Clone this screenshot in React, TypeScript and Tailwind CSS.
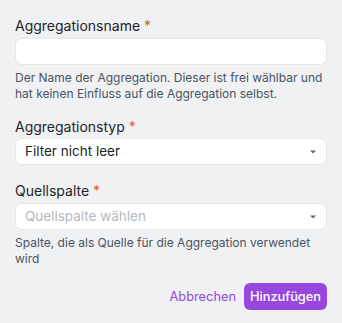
import React from "react";

function Label({ text }: { text: string }) {
  return (
    <div className="text-[14px] leading-[18px] text-[#1f2329]">
      {text} <span className="text-[#e2591c]">*</span>
    </div>
  );
}

function Caret() {
  return (
    <svg width="6" height="4" viewBox="0 0 6 4" className="shrink-0">
      <path d="M0 0.5 L6 0.5 L3 3.5 Z" fill="#5b6b7d" />
    </svg>
  );
}

export default function App() {
  return (
    <div
      className="w-[342px] h-[323px] bg-[#f0f1f3] px-[15px] pt-[17px]"
      style={{ fontFamily: "Inter, 'Noto Sans', sans-serif" }}
    >
      <Label text="Aggregationsname" />
      <div className="mt-[3px] h-[27px] rounded-[7px] border border-[#e3e5e8] bg-white" />
      <p className="mt-[5px] text-[12px] leading-[16px] text-[#4a5462]">
        Der Name der Aggregation. Dieser ist frei wählbar und hat keinen Einfluss auf die Aggregation selbst.
      </p>

      <div className="mt-[16px]">
        <Label text="Aggregationstyp" />
      </div>
      <div className="mt-[2px] flex h-[27px] items-center justify-between rounded-[7px] border border-[#e3e5e8] bg-white pl-[9px] pr-[10px]">
        <span className="text-[13.5px] text-[#1f2329]">Filter nicht leer</span>
        <Caret />
      </div>

      <div className="mt-[17px]">
        <Label text="Quellspalte" />
      </div>
      <div className="mt-[3px] flex h-[27px] items-center justify-between rounded-[7px] border border-[#e3e5e8] bg-white pl-[9px] pr-[10px]">
        <span className="text-[13.5px] text-[#b4b9c0]">Quellspalte wählen</span>
        <Caret />
      </div>
      <p className="mt-[5px] text-[12px] leading-[16px] text-[#4a5462]">
        Spalte, die als Quelle für die Aggregation verwendet wird
      </p>

      <div className="mt-[16px] flex items-center justify-end gap-[8px]">
        <button className="text-[12.8px] text-[#9648dd]">Abbrechen</button>
        <button className="h-[27px] rounded-[6px] bg-[#9747de] px-[6px] text-[12.8px] font-medium text-white">
          Hinzufügen
        </button>
      </div>
    </div>
  );
}
